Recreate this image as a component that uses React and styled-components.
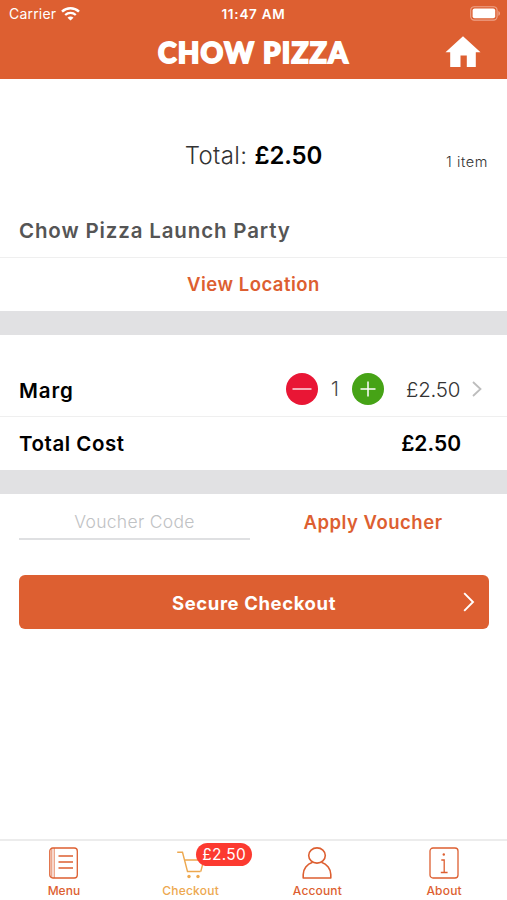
import styled, { createGlobalStyle } from "styled-components";

const ORANGE = "#dd5f31";

const TABS = [
  { label: "Menu", Icon: MenuIcon, spacing: "0px" },
  { label: "Checkout", Icon: CartIcon, badge: "£2.50", active: true, spacing: "0.2px" },
  { label: "Account", Icon: AccountIcon, spacing: "0.15px" },
  { label: "About", Icon: AboutIcon, spacing: "0.2px" },
];

function App() {
  return (
    <>
      <GlobalStyle />
      <Screen>
        <Header>
          <StatusBar>
            <Carrier>
              Carrier <WifiIcon />
            </Carrier>
            <Clock>11:47 AM</Clock>
            <BatteryIcon />
          </StatusBar>
          <NavBar>
            <Brand>CHOW PIZZA</Brand>
            <HomeButton aria-label="Home">
              <HomeIcon />
            </HomeButton>
          </NavBar>
        </Header>

        <Summary>
          <Total>
            Total: <b>£2.50</b>
          </Total>
          <ItemCount>1 item</ItemCount>
        </Summary>
        <Place>Chow Pizza Launch Party</Place>
        <LocationLink>View Location</LocationLink>
        <Gap />

        <BasketRow>
          <ItemName>Marg</ItemName>
          <Round $color="#e91635" aria-label="Remove">
            <svg width="20" height="20" viewBox="0 0 20 20">
              <path d="M0.5 10h19" stroke="#fff" strokeWidth="1.3" />
            </svg>
          </Round>
          <Quantity>1</Quantity>
          <Round $color="#46a316" aria-label="Add">
            <svg width="16" height="16" viewBox="0 0 16 16">
              <path d="M0.5 8h15M8 0.5v15" stroke="#fff" strokeWidth="1.5" />
            </svg>
          </Round>
          <Price>£2.50</Price>
          <svg width="12" height="18" viewBox="0 0 12 18">
            <path d="M2 2l7.5 7L2 16" fill="none" stroke="#bdbdbd" strokeWidth="1.8" />
          </svg>
        </BasketRow>
        <CostRow>
          <CostLabel>Total Cost</CostLabel>
          <CostValue>£2.50</CostValue>
        </CostRow>
        <Gap />

        <VoucherRow>
          <VoucherInput>Voucher Code</VoucherInput>
          <ApplyButton>Apply Voucher</ApplyButton>
        </VoucherRow>
        <CheckoutButton>
          <CheckoutLabel>Secure Checkout</CheckoutLabel>
          <svg width="12" height="20" viewBox="0 0 12 20">
            <path d="M1.2 1.2L10 10l-8.8 8.8" fill="none" stroke="#fff" strokeWidth="1.9" />
          </svg>
        </CheckoutButton>

        <TabBar>
          {TABS.map(({ label, Icon, badge, active, spacing }) => (
            <Tab key={label} $active={active}>
              <IconBox>
                <Icon />
                {badge && <Badge>{badge}</Badge>}
              </IconBox>
              <TabLabel $spacing={spacing}>{label}</TabLabel>
            </Tab>
          ))}
        </TabBar>
      </Screen>
    </>
  );
}

export default App;

/* icons */
function WifiIcon() {
  return (
    <svg width="19" height="14" viewBox="0 0 19 14" fill="none" stroke="#fff">
      <path d="M1 4.7C5.8 0.2 13.2 0.2 18 4.7" strokeWidth="2.5" />
      <path d="M4.2 8C7.2 5.2 11.8 5.2 14.8 8" strokeWidth="2.3" />
      <path d="M9.5 13.6L6.5 10.8a4 4 0 0 1 6 0z" fill="#fff" stroke="none" />
    </svg>
  );
}

function BatteryIcon() {
  return (
    <svg width="31" height="15" viewBox="0 0 31 15">
      <rect x="0.7" y="0.7" width="26.4" height="13.4" rx="3.6" fill="none" stroke="#eea48a" strokeWidth="1.1" />
      <rect x="2.6" y="2.6" width="22.6" height="9.6" rx="2" fill="#fff" />
      <path d="M28.4 5c2.1 0.8 2.1 4 0 4.8z" fill="#eea48a" />
    </svg>
  );
}

function HomeIcon() {
  return (
    <svg width="36" height="32" viewBox="0 0 36 32">
      <path d="M18 0.2L35.5 16.2h-4.7V31H21.8V19.5h-6.3V31H5.2V16.2H0.5z" fill="#fff" />
    </svg>
  );
}

function MenuIcon() {
  return (
    <svg width="30" height="32" viewBox="0 0 30 32" fill="none" stroke={ORANGE}>
      <rect x="1.8" y="1" width="27.5" height="30" rx="3" strokeWidth="1.3" />
      <path d="M3.8 1.5v29M6.2 1v30" strokeWidth="0.8" />
      <path d="M10.5 9h14.5M10.5 15h14.500M10.5 21h14.5" strokeWidth="1.3" />
    </svg>
  );
}

function CartIcon() {
  return (
    <svg width="30" height="32" viewBox="0 0 30 32" fill="none" stroke="#eda84f" strokeWidth="1.4">
      <path d="M2.2 5.2h5.300L12.500 24.500h13M9.600 13h19.200l-3 11.500" />
      <circle cx="14" cy="29.500" r="1.7" fill="#eda84f" stroke="none" />
      <circle cx="23" cy="29.500" r="1.7" fill="#eda84f" stroke="none" />
    </svg>
  );
}

function AccountIcon() {
  return (
    <svg width="30" height="32" viewBox="0 0 30 32" fill="none" stroke={ORANGE} strokeWidth="1.6">
      <ellipse cx="15" cy="8.5" rx="8.3" ry="7.6" />
      <path d="M10.6 15.2C5 17 1.2 22 1.2 27.5V31H28.8V27.5C28.8 22 25 17 19.4 15.2" strokeLinejoin="round" />
    </svg>
  );
}

function AboutIcon() {
  return (
    <svg width="30" height="32" viewBox="0 0 30 32" fill="none" stroke={ORANGE} strokeWidth="1.3">
      <rect x="1" y="1" width="28" height="30" rx="3" />
      <path d="M12.3 13h2.9v12.3M11.8 25.5h6.8" />
      <circle cx="14.8" cy="7.5" r="1.2" fill={ORANGE} stroke="none" />
    </svg>
  );
}

const GlobalStyle = createGlobalStyle`
  * {
    box-sizing: border-box;
  }

  body {
    margin: 0;
    background-color: #fff;
    font-family: "Inter", sans-serif;
  }

  svg {
    display: block;
    flex-shrink: 0;
  }

  button {
    padding: 0;
    border: 0;
    background: none;
    font-family: inherit;
  }
`;

const Screen = styled.div`
  display: flex;
  flex-direction: column;
  width: 507px;
  height: 900px;
  overflow: hidden;
  background-color: #fff;
`;

const Header = styled.header`
  height: 79px;
  background-color: ${ORANGE};
  color: #fff;
`;

const StatusBar = styled.div`
  display: grid;
  grid-template-columns: 1fr auto 1fr;
  align-items: center;
  height: 27px;
  padding: 0 6px 0 9px;

  > :last-child {
    justify-self: end;
  }
`;

const Carrier = styled.div`
  display: flex;
  align-items: center;
  gap: 5px;
  font-size: 14px;
  line-height: 18px;
  letter-spacing: 0.2px;
`;

const Clock = styled.div`
  margin-right: 3px;
  font-size: 13.5px;
  font-weight: 600;
  line-height: 18px;
  letter-spacing: 0.75px;
`;

const NavBar = styled.div`
  display: grid;
  grid-template-columns: 1fr auto 1fr;
  align-items: center;
  height: 51px;
  padding-right: 26px;
  padding-left: 26px;
`;

const Brand = styled.h1`
  grid-column: 2;
  margin: 0;
  font-family: "Lato", sans-serif;
  font-size: 28px;
  font-weight: 900;
  line-height: 51px;
  letter-spacing: 1.3px;
  -webkit-text-stroke: 1.8px #fff;
`;

const HomeButton = styled.button`
  justify-self: end;
  padding-bottom: 2px;
`;

const Summary = styled.section`
  display: grid;
  grid-template-columns: 1fr auto 1fr;
  align-items: center;
  height: 125px;
  padding: 28px 19px 0;
`;

const Total = styled.div`
  grid-column: 2;
  color: #333;
  font-size: 24px;
  font-weight: 300;
  line-height: 30px;
  letter-spacing: 0.35px;

  b {
    color: #000;
    font-weight: 600;
    letter-spacing: -0.1px;
  }
`;

const ItemCount = styled.div`
  justify-self: end;
  padding-top: 12px;
  color: #333;
  font-size: 14.5px;
  font-weight: 300;
  line-height: 18px;
  letter-spacing: 0.6px;
`;

const Place = styled.div`
  height: 54px;
  padding-left: 19px;
  border-bottom: 1px solid #efefef;
  color: #555;
  font-size: 20.5px;
  font-weight: 600;
  line-height: 54px;
  letter-spacing: 0.85px;
`;

const LocationLink = styled.button`
  height: 53px;
  color: ${ORANGE};
  font-size: 18.5px;
  font-weight: 600;
  line-height: 53px;
  letter-spacing: 0.5px;
`;

const Gap = styled.div`
  height: 24px;
  background-color: #e1e1e3;
`;

const BasketRow = styled.div`
  display: flex;
  align-items: center;
  height: 82px;
  padding: 27px 24px 0 19px;
  border-bottom: 1px solid #efefef;
`;

const ItemName = styled.div`
  flex: 1;
  padding-top: 2px;
  font-size: 20.5px;
  font-weight: 600;
  letter-spacing: 0.9px;
`;

const Round = styled.button`
  display: flex;
  align-items: center;
  justify-content: center;
  width: 32px;
  height: 32px;
  border-radius: 50%;
  background-color: ${(props) => props.$color};
`;

const Quantity = styled.div`
  width: 34px;
  color: #444;
  font-size: 20px;
  font-weight: 300;
  text-align: center;
`;

const Price = styled.div`
  width: 87px;
  padding-left: 22px;
  color: #333;
  font-size: 20.5px;
  font-weight: 300;
  letter-spacing: -0.25px;
`;

const CostRow = styled.div`
  display: flex;
  align-items: center;
  justify-content: space-between;
  height: 53px;
  padding: 0 46px 0 19px;
`;

const CostLabel = styled.div`
  font-size: 20.5px;
  font-weight: 600;
  letter-spacing: 0.55px;
`;

const CostValue = styled.div`
  font-size: 21px;
  font-weight: 600;
`;

const VoucherRow = styled.div`
  display: grid;
  grid-template-columns: 231px 246px;
  height: 46px;
  margin-left: 19px;
`;

const VoucherInput = styled.div`
  padding-top: 11px;
  border-bottom: 2px solid #dfe0e2;
  color: #bfc2c4;
  font-size: 17.5px;
  font-weight: 300;
  line-height: 33px;
  letter-spacing: 0.3px;
  text-align: center;
`;

const ApplyButton = styled.button`
  padding-top: 10px;
  color: ${ORANGE};
  font-size: 18.5px;
  font-weight: 600;
  line-height: 36px;
  letter-spacing: 0.5px;
`;

const CheckoutButton = styled.button`
  display: grid;
  grid-template-columns: 1fr auto 1fr;
  align-items: center;
  height: 54px;
  margin: 35px 18px 0 19px;
  padding: 0 14px;
  border-radius: 6px;
  background-color: ${ORANGE};
  color: #fff;

  svg {
    justify-self: end;
  }
`;

const CheckoutLabel = styled.span`
  grid-column: 2;
  padding-top: 1px;
  font-size: 18.5px;
  font-weight: 700;
  letter-spacing: 0.6px;
`;

const TabBar = styled.nav`
  display: grid;
  grid-template-columns: repeat(4, 1fr);
  height: 61px;
  margin-top: auto;
  border-top: 2px solid #ececec;
`;

const Tab = styled.div`
  display: flex;
  flex-direction: column;
  align-items: center;
  padding-top: 6px;
  color: ${(props) => (props.$active ? "#eda84f" : ORANGE)};
`;

const IconBox = styled.div`
  position: relative;
`;

const Badge = styled.span`
  position: absolute;
  top: -4px;
  left: 21px;
  width: 56px;
  height: 23px;
  border-radius: 12px;
  background-color: #fc3a30;
  color: #fff;
  font-size: 15.5px;
  line-height: 23px;
  letter-spacing: 0.3px;
  text-align: center;
`;

const TabLabel = styled.div`
  margin-top: 4px;
  padding-left: 1px;
  font-size: 12px;
  font-weight: 500;
  line-height: 16px;
  letter-spacing: ${(props) => props.$spacing};
`;
